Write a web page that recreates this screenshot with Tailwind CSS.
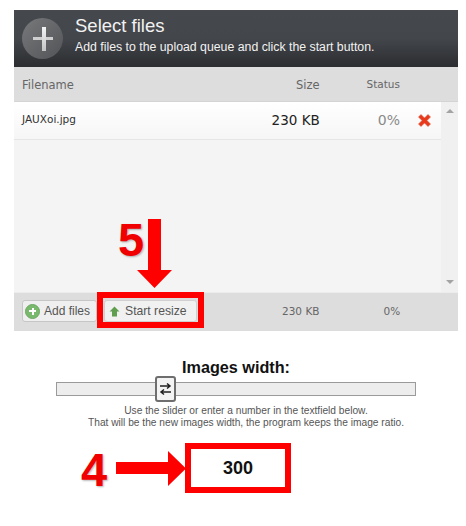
<!DOCTYPE html>
<html lang="en">
<head>
    <meta charset="UTF-8">
    <title>Image resize</title>
    <script src="https://cdn.jsdelivr.net/npm/@tailwindcss/browser@4"></script>
</head>
<body class="bg-white font-['Liberation_Sans',sans-serif]">
<div class="relative w-[466px] h-[526px] overflow-hidden pt-[10px]">
    <!-- Uploader panel -->
    <section class="ml-[14px] w-[444px]">
        <header class="h-[57px] flex bg-gradient-to-b from-[#45484d] via-[#43464b] to-[#2b2d30] text-[#f2f2f2]">
            <div class="relative w-[41px] h-[41px] ml-[8px] mt-[8px] rounded-full bg-gradient-to-br from-[#77797b] to-[#525457] shrink-0">
                <div class="absolute left-[11px] top-[19px] w-[20px] h-[3px] bg-[#cfcfcf]"></div>
                <div class="absolute left-[20px] top-[9px] w-[4px] h-[24px] bg-gradient-to-b from-[#f4f4f4] to-[#c4c4c4]"></div>
            </div>
            <div class="ml-[12px]">
                <h2 class="text-[18.5px] leading-[22px] mt-[5px]">Select files</h2>
                <p class="text-[12.3px] leading-[14px] mt-[3px]">Add files to the upload queue and click the start button.</p>
            </div>
        </header>

        <div class="h-[35px] pt-[3px] flex items-center bg-[#dddddd] text-[#666] text-[11.5px] font-['DejaVu_Sans',sans-serif] border-b border-[#d4d4d4]">
            <span class="ml-[8px]">Filename</span>
            <span class="ml-auto">Size</span>
            <span class="ml-[47px] mr-[58px] -mt-[2px] text-[10.5px]">Status</span>
        </div>

        <div class="h-[190px] flex bg-[#f4f4f4]">
            <div class="flex-1">
                <div class="h-[38px] flex items-center bg-gradient-to-b from-white to-[#f6f6f6] border-b border-[#e6e6e6] font-['DejaVu_Sans',sans-serif]">
                    <span class="ml-[8px] -mt-[2px] text-[10.5px] text-[#333]">JAUXoi.jpg</span>
                    <span class="ml-auto text-[13.5px] text-[#222]">230 KB</span>
                    <span class="ml-[58px] text-[14px] text-[#8a8a8a]">0%</span>
                    <svg class="ml-[18px] mr-[10px]" width="13" height="13" viewBox="0 0 13 13">
                        <path d="M0.500 3 3 0.500 6.500 4 10 0.500 12.500 3 9 6.500 12.500 10 10 12.500 6.500 9 3 12.500 0.500 10 4 6.500Z" fill="#e8391d" stroke="#d9603f" stroke-width="0.600"/>
                    </svg>
                </div>
            </div>
            <!-- Scrollbar -->
            <div class="w-[17px] bg-[#f0f0f0] flex flex-col items-center justify-between pt-[7px] pb-[8px]">
                <div class="w-0 h-0 border-x-[4px] border-x-transparent border-b-[4px] border-b-[#a3a3a3]"></div>
                <div class="w-0 h-0 border-x-[4px] border-x-transparent border-t-[4px] border-t-[#a3a3a3]"></div>
            </div>
        </div>

        <footer class="h-[39px] flex items-center bg-[#dddddd] border-t border-[#ececec] text-[#666]">
            <button class="ml-[8px] -mt-[2px] w-[75px] h-[22px] flex items-center rounded-[3px] border border-[#c6c6c6] bg-[#efefef] text-[12px] text-[#555]">
                <span class="relative ml-[2px] w-[15px] h-[15px] rounded-full bg-[#79b96d] border border-[#6aa85f] shrink-0">
                    <span class="absolute left-[3px] top-[5.500px] w-[7px] h-[2px] bg-white"></span>
                    <span class="absolute left-[5.500px] top-[3px] w-[2px] h-[7px] bg-white"></span>
                </span>
                <span class="ml-[4px]">Add files</span>
            </button>
            <button class="ml-[7px] -mt-[2px] w-[93px] h-[22px] flex items-center rounded-[3px] border border-[#d0d0d0] bg-[#f1f1f1] text-[12.2px] text-[#555]">
                <svg class="ml-[4px]" width="11" height="11" viewBox="0 0 11 11"><path d="M5.500 0.500 10.500 5.500H8V10.500H3V5.500H0.500Z" fill="#5f9e4e"/></svg>
                <span class="ml-[5px]">Start resize</span>
            </button>
            <span class="ml-[85px] font-['DejaVu_Sans',sans-serif] text-[10.5px]">230 KB</span>
            <span class="ml-[64px] font-['DejaVu_Sans',sans-serif] text-[10.5px]">0%</span>
        </footer>
    </section>

    <!-- Resize controls -->
    <section class="mt-[27px] flex flex-col items-center w-[472px]">
        <h3 class="text-[16.2px] leading-[18px] font-bold text-[#111]">Images width:</h3>
        <div class="relative mt-[6px] w-[360px] h-[14px] bg-[#ededed] border border-[#9a9a9a]">
            <div class="absolute left-[98px] -top-[7px] w-[21px] h-[26px] flex items-center justify-center bg-[#f4f4f4] border-2 border-[#6e6e6e] rounded-[3px]">
                <svg width="13" height="14" viewBox="0 0 13 14" fill="none" stroke="#222" stroke-width="1.500">
                    <path d="M1 4H11M8 1.500 11 4 8 6.500"/>
                    <path d="M12 10H2M5 7.500 2 10 5 12.500"/>
                </svg>
            </div>
        </div>
        <p class="mt-[9px] ml-[20px] text-center text-[10.2px] leading-[11.500px] text-[#555]">Use the slider or enter a number in the textfield below.<br>That will be the new images width, the program keeps the image ratio.</p>
    </section>

    <div class="absolute left-[185px] top-[443px] w-[106px] h-[50px] flex items-center justify-center border-[6px] border-[#ff0000] bg-white text-[18px] font-bold text-[#111]">300</div>

    <!-- Red annotations -->
    <span class="absolute left-[118px] top-[212px] text-[47px] leading-[55px] font-bold text-[#f00000] [text-shadow:1px_1px_2px_rgba(0,0,0,0.3)]">5</span>
    <svg class="absolute left-[136px] top-[219px]" width="37" height="70" viewBox="0 0 37 70"><path d="M12 0H25V51H36L18.500 69 1 51H12Z" fill="#ff0000"/></svg>
    <div class="absolute left-[97px] top-[292px] w-[107px] h-[36px] border-[6px] border-[#ff0000]"></div>
    <span class="absolute left-[81px] top-[442px] text-[47px] leading-[55px] font-bold text-[#f00000] [text-shadow:1px_1px_2px_rgba(0,0,0,0.3)]">4</span>
    <svg class="absolute left-[116px] top-[450px]" width="70" height="37" viewBox="0 0 70 37"><path d="M0 12H52V1L70 18.500 52 36V24H0Z" fill="#ff0000"/></svg>
</div>
</body>
</html>
